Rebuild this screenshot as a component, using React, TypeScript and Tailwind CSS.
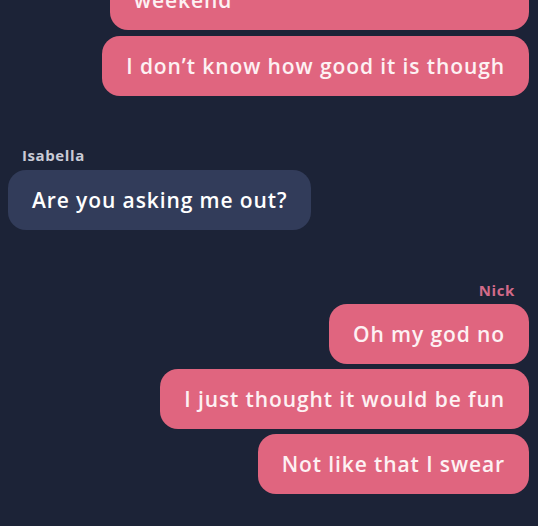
export default function App() {
  const font = { fontFamily: '"Open Sans", "Liberation Sans", sans-serif' };
  const pink = "rounded-[18px] bg-[#e0657f] px-6 py-4 text-[21px] font-semibold leading-7 tracking-[0.9px] text-[#fdf1f3]";

  return (
    <div className="h-screen w-full overflow-hidden bg-[#1c2337]" style={font}>
      <div className="mt-[-58px] flex flex-col pl-2 pr-[9px]">
        {/* earlier message, scrolled off the top */}
        <div className="flex flex-col items-end gap-[6px]">
          <div className={`w-[419px] ${pink}`}>
            We should go check it out this
            <br />
            weekend
          </div>
          <div className={pink}>I don’t know how good it is though</div>
        </div>

        {/* Isabella */}
        <div className="mt-[49px] flex flex-col items-start">
          <div className="pl-[14px] text-[15px] font-bold leading-5 tracking-[0.6px] text-[#c9cbd6]">Isabella</div>
          <div className="mt-[5px] rounded-[18px] bg-[#323c5a] px-6 py-4 text-[21px] font-semibold leading-7 tracking-[0.9px] text-white">
            Are you asking me out?
          </div>
        </div>

        {/* Nick */}
        <div className="mt-[50px] flex flex-col items-end">
          <div className="pr-[14px] text-[15px] font-bold leading-5 tracking-[0.6px] text-[#d26a89]">Nick</div>
          <div className="mt-1 flex flex-col items-end gap-[5px]">
            {["Oh my god no", "I just thought it would be fun", "Not like that I swear"].map(t => (
              <div key={t} className={pink}>
                {t}
              </div>
            ))}
          </div>
        </div>
      </div>
    </div>
  );
}
